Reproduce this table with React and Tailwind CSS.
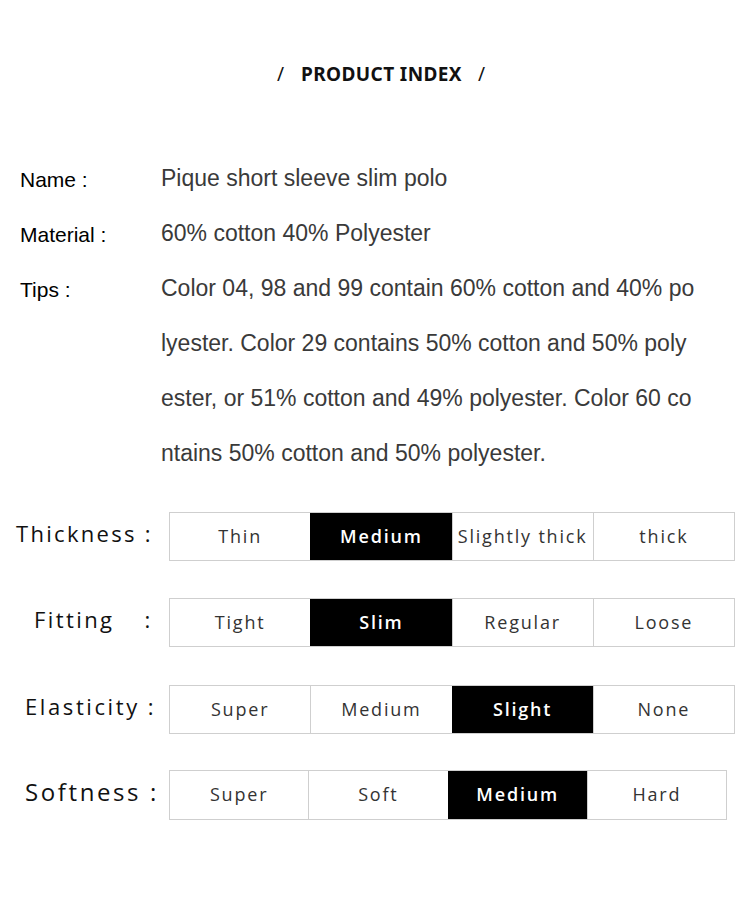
const info = [
    { label: "Name :", value: ["Pique short sleeve slim polo"] },
    { label: "Material :", value: ["60% cotton 40% Polyester"] },
    {
        label: "Tips :",
        value: [
            "Color 04, 98 and 99 contain 60% cotton and 40% po",
            "lyester. Color 29 contains 50% cotton and 50% poly",
            "ester, or 51% cotton and 49% polyester. Color 60 co",
            "ntains 50% cotton and 50% polyester.",
        ],
    },
];

const scales = [
    {
        name: "Thickness",
        labelClass: "pl-[16px] tracking-[2.3px]",
        colonClass: "ml-[8px]",
        options: ["Thin", "Medium", "Slightly thick", "thick"],
        active: 1,
        boxClass: "w-[566px] h-[49px]",
        mt: "mt-[31px]",
    },
    {
        name: "Fitting",
        labelClass: "pl-[34px] tracking-[2.4px]",
        colonClass: "ml-[30px]",
        options: ["Tight", "Slim", "Regular", "Loose"],
        active: 1,
        boxClass: "w-[566px] h-[49px]",
        mt: "mt-[37px]",
    },
    {
        name: "Elasticity",
        labelClass: "pl-[25px] tracking-[2.6px]",
        colonClass: "ml-[8px]",
        options: ["Super", "Medium", "Slight", "None"],
        active: 2,
        boxClass: "w-[566px] h-[49px]",
        mt: "mt-[38px]",
    },
    {
        name: "Softness",
        labelClass: "pl-[25px] tracking-[2.6px] text-[24px]",
        colonClass: "ml-[9px]",
        options: ["Super", "Soft", "Medium", "Hard"],
        active: 2,
        boxClass: "w-[558px] h-[50px]",
        mt: "mt-[36px]",
    },
];

function ScaleRow({ row }) {
    return (
        <div className={`flex items-center ${row.mt}`}>
            <div
                className={`w-[169px] shrink-0 flex text-[22px] text-[#111] ${row.labelClass} -mt-[6px]`}
                style={{ fontFamily: '"Open Sans", sans-serif' }}
            >
                <span>{row.name}</span>
                <span className={row.colonClass}>:</span>
            </div>
            <div className={`flex border border-[#cfcfcf] ${row.boxClass}`}>
                {row.options.map((opt, i) => (
                    <div
                        key={opt}
                        className={`flex-1 flex items-center justify-center text-[18px] tracking-[1.8px] ${
                            i > 0 ? "border-l border-[#cfcfcf]" : ""
                        } ${i === row.active ? "bg-black text-white font-semibold border-black" : "text-[#333]"}`}
                        style={{ fontFamily: '"Open Sans", sans-serif' }}
                    >
                        {opt}
                    </div>
                ))}
            </div>
        </div>
    );
}

export default function App() {
    return (
        <div className="w-[750px] h-[910px] bg-white overflow-hidden">
            <div
                className="pt-[60px] flex justify-center items-center text-[19px] text-[#111]"
                style={{ fontFamily: '"Noto Sans", sans-serif' }}
            >
                <span className="mr-[17px] ml-[12px] font-normal">/</span>
                <span className="font-bold tracking-[0.4px]">PRODUCT INDEX</span>
                <span className="ml-[16px] font-normal">/</span>
            </div>

            <div
                className="mt-[63px]"
                style={{ fontFamily: '"Liberation Sans", Arial, sans-serif' }}
            >
                {info.map((item) => (
                    <div key={item.label} className="flex">
                        <div className="w-[161px] shrink-0 pl-[20px] text-[21px] leading-[55px] text-black">
                            {item.label}
                        </div>
                        <div className="text-[23px] leading-[55px] text-[#3a3a3a] -mt-[1px]">
                            {item.value.map((line) => (
                                <div key={line}>{line}</div>
                            ))}
                        </div>
                    </div>
                ))}
            </div>

            <div>
                {scales.map((row) => (
                    <ScaleRow key={row.name} row={row} />
                ))}
            </div>
        </div>
    );
}
